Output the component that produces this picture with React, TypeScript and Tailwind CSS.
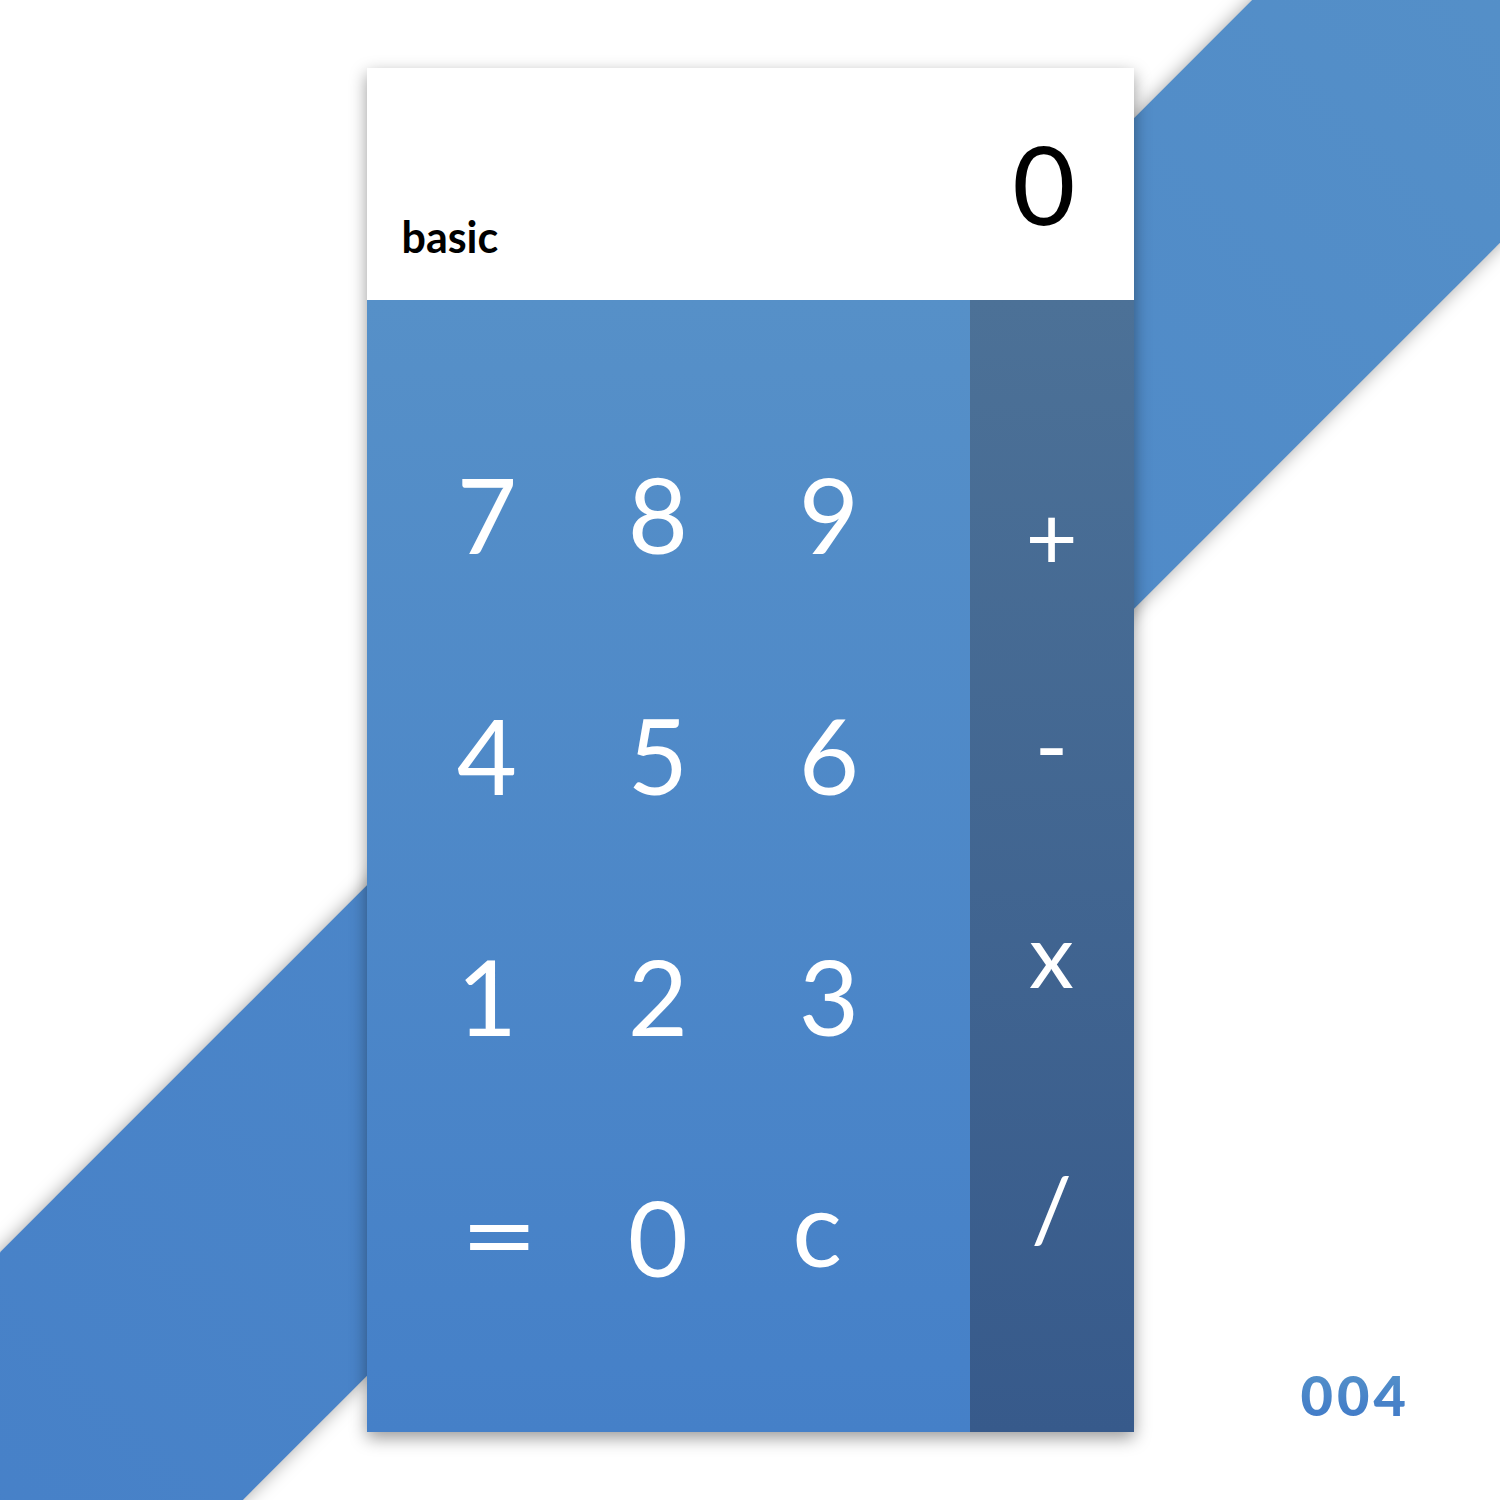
import React from 'react'

const digits = ['7', '8', '9', '4', '5', '6', '1', '2', '3', '=', '0', 'c']

// nudges so the odd glyphs sit where the design puts them
const keyClass: Record<string, string> = {
  '=': 'inline-block scale-x-[1.3] ml-[24px] -mt-[8px]',
  c: 'mr-[24px] -mt-[20px]',
}

export default function App() {
  return (
    <div className="relative w-[1500px] h-[1500px] overflow-hidden bg-white font-['Lato','Liberation_Sans',sans-serif]">
      {/* diagonal band */}
      <div className="absolute left-[-451px] top-[575px] w-[2400px] h-[347px] -rotate-45 bg-gradient-to-r from-[#4680c8] to-[#5590c8] shadow-[0_0_18px_rgba(0,0,0,0.35)]" />

      <div className="relative flex justify-center pt-[68px]">
        <div className="w-[767px] h-[1364px] flex flex-col shadow-[0_6px_16px_rgba(0,0,0,0.4)]">
          {/* display */}
          <div className="h-[232px] bg-white flex justify-between px-[35px]">
            <div className="self-end pb-[42px] text-[43px] font-bold leading-none text-black">basic</div>
            <div className="pt-[60px] pr-[23px] text-[109px] font-normal leading-none text-black">0</div>
          </div>

          {/* keys */}
          <div className="flex-1 flex">
            <div className="w-[603px] bg-gradient-to-b from-[#5690c8] to-[#4580c8] pt-[93px] pl-[35px]">
              <div className="grid grid-cols-[171px_171px_171px] auto-rows-[241px] items-center justify-items-center text-white text-[104px] leading-none">
                {digits.map((d) => (
                  <button key={d} type="button" className={'leading-none ' + (keyClass[d] ?? '')}>
                    {d}
                  </button>
                ))}
              </div>
            </div>
            <div className="flex-1 bg-gradient-to-b from-[#4c7197] to-[#375a8b] flex flex-col items-center pt-[190px] text-white text-[90px] leading-none">
              <button type="button" className="h-[90px] leading-none">+</button>
              <button type="button" className="h-[90px] mt-[118px] leading-none">-</button>
              <button type="button" className="h-[90px] mt-[120px] leading-none">x</button>
              <button type="button" className="h-[90px] mt-[164px] leading-none">/</button>
            </div>
          </div>
        </div>
      </div>

      <div className="absolute right-[90px] bottom-[77px] text-[56px] font-black tracking-[4px] leading-none bg-gradient-to-b from-[#5592c9] to-[#4079c8] bg-clip-text text-transparent">
        004
      </div>
    </div>
  )
}
